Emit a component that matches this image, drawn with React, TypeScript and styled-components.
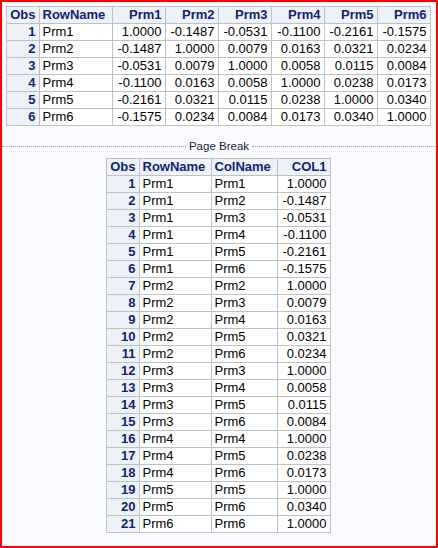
import React from "react";
import styled, { createGlobalStyle } from "styled-components";

const Global = createGlobalStyle`
  html, body { margin: 0; padding: 0; background: #fafbfe; }
  body { font-family: "Liberation Sans", Arial, sans-serif; }
`;

const Page = styled.div`
  box-sizing: border-box;
  width: 438px;
  height: 548px;
  border: 2px solid #ff0000;
  background: #fafbfe;
  padding-top: 4px;
  display: flex;
  flex-direction: column;
  align-items: center;
  overflow: hidden;
`;

const Table = styled.table`
  border-collapse: collapse;
  border: 1px solid #c1c1c1;
  font-family: "Liberation Sans", Arial, sans-serif;
  font-size: 13px;
  margin-left: -2px;
`;

const Th = styled.th<{ $w: number; $align?: "left" | "right" }>`
  width: ${(p) => p.$w}px;
  box-sizing: border-box;
  background: #edf2f9;
  color: #112277;
  font-weight: bold;
  text-align: ${(p) => p.$align || "right"};
  border: 1px solid #c1c1c1;
  padding: 1px 3px;
  line-height: 14px;
  height: 17px;
`;

const ObsCell = styled.th`
  background: #edf2f9;
  color: #112277;
  font-weight: bold;
  text-align: right;
  border: 1px solid #c1c1c1;
  padding: 1px 3px;
  line-height: 14px;
`;

const Td = styled.td<{ $align?: "left" | "right" }>`
  background: #ffffff;
  color: #000000;
  text-align: ${(p) => p.$align || "right"};
  border: 1px solid #c1c1c1;
  padding: 1px 3px;
  line-height: 14px;
  white-space: nowrap;
`;

const PageBreak = styled.div`
  align-self: stretch;
  display: flex;
  align-items: center;
  margin: 13px 0 5px;
  height: 14px;
`;

const Dots = styled.div`
  flex: 1;
  border-top: 1px dotted #a0a0a0;
  height: 0;
`;

const BreakLabel = styled.span`
  font-family: "Liberation Sans", Arial, sans-serif;
  font-size: 11.5px;
  color: #1c1c3a;
  padding: 0 3px;
  line-height: 14px;
`;

const names = ["Prm1", "Prm2", "Prm3", "Prm4", "Prm5", "Prm6"];
const matrix = [
  ["1.0000", "-0.1487", "-0.0531", "-0.1100", "-0.2161", "-0.1575"],
  ["-0.1487", "1.0000", "0.0079", "0.0163", "0.0321", "0.0234"],
  ["-0.0531", "0.0079", "1.0000", "0.0058", "0.0115", "0.0084"],
  ["-0.1100", "0.0163", "0.0058", "1.0000", "0.0238", "0.0173"],
  ["-0.2161", "0.0321", "0.0115", "0.0238", "1.0000", "0.0340"],
  ["-0.1575", "0.0234", "0.0084", "0.0173", "0.0340", "1.0000"],
];

const long: [string, string, string][] = [];
for (let i = 0; i < 6; i++) {
  for (let j = i; j < 6; j++) {
    long.push([names[i], names[j], matrix[i][j]]);
  }
}

export default function App() {
  return (
    <>
      <Global />
      <Page>
        <Table>
          <thead>
            <tr>
              <Th $w={33}>Obs</Th>
              <Th $w={73} $align="left">RowName</Th>
              {names.map((n) => (
                <Th key={n} $w={53}>{n}</Th>
              ))}
            </tr>
          </thead>
          <tbody>
            {matrix.map((row, i) => (
              <tr key={i}>
                <ObsCell>{i + 1}</ObsCell>
                <Td $align="left">{names[i]}</Td>
                {row.map((v, j) => (
                  <Td key={j}>{v}</Td>
                ))}
              </tr>
            ))}
          </tbody>
        </Table>
        <PageBreak>
          <Dots />
          <BreakLabel>Page Break</BreakLabel>
          <Dots />
        </PageBreak>
        <Table>
          <thead>
            <tr>
              <Th $w={33}>Obs</Th>
              <Th $w={72} $align="left">RowName</Th>
              <Th $w={66} $align="left">ColName</Th>
              <Th $w={53}>COL1</Th>
            </tr>
          </thead>
          <tbody>
            {long.map(([r, c, v], i) => (
              <tr key={i}>
                <ObsCell>{i + 1}</ObsCell>
                <Td $align="left">{r}</Td>
                <Td $align="left">{c}</Td>
                <Td>{v}</Td>
              </tr>
            ))}
          </tbody>
        </Table>
      </Page>
    </>
  );
}
